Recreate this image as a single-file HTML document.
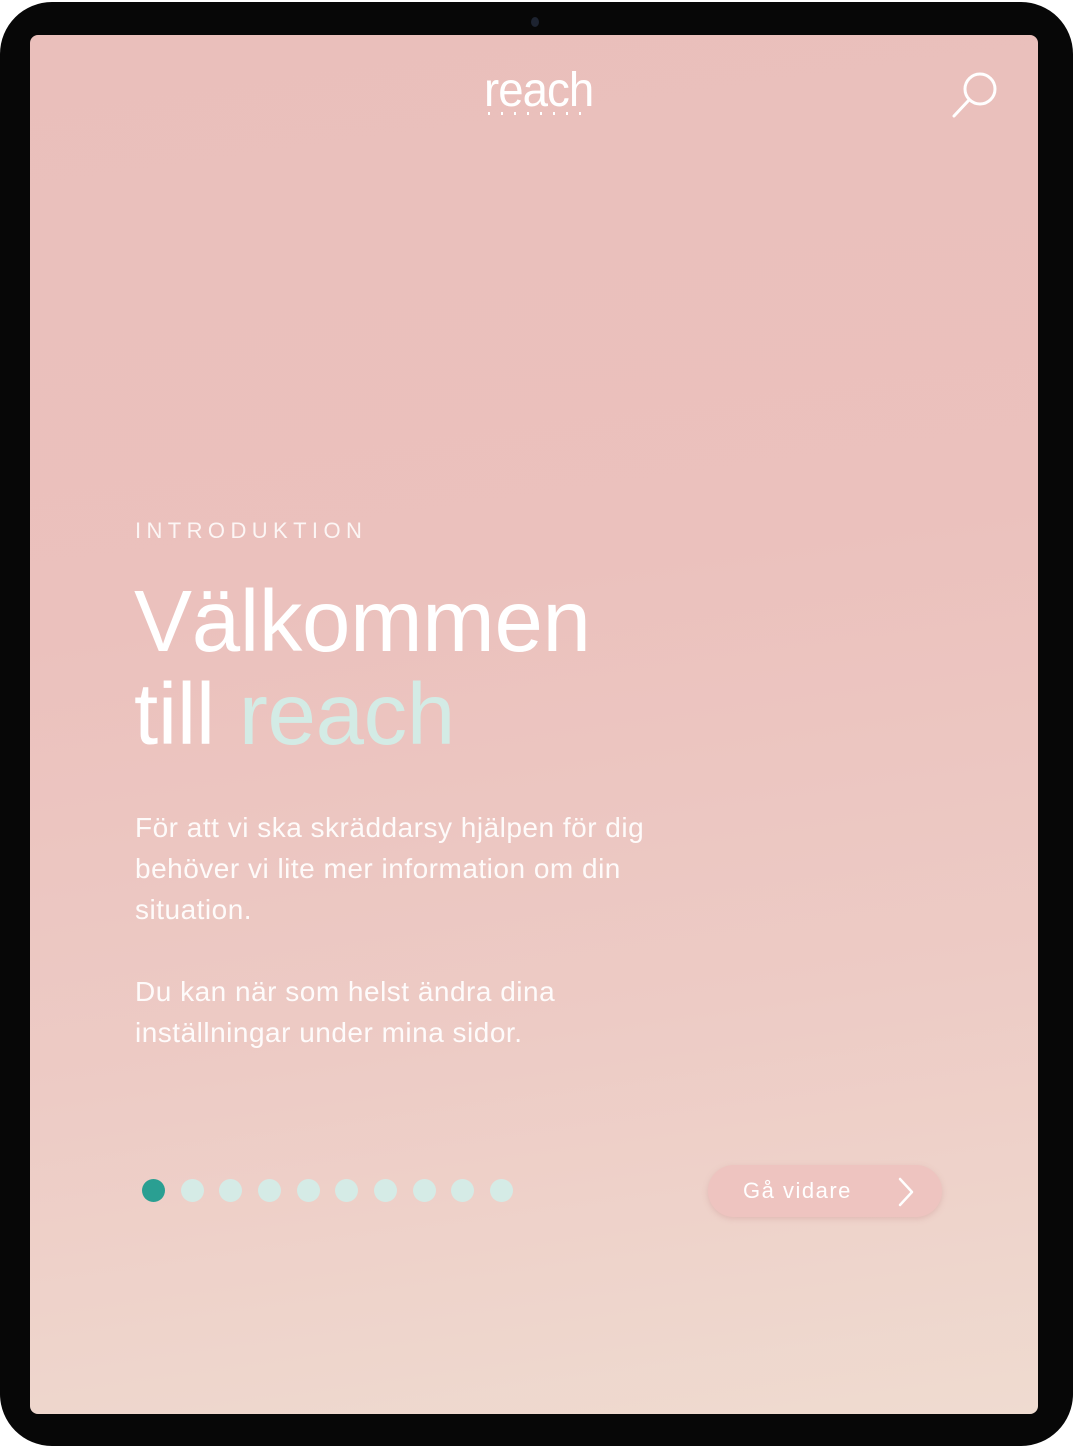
<!DOCTYPE html>
<html><head><meta charset="utf-8"><style>
html,body{margin:0;padding:0;background:#fff;width:1077px;height:1448px;overflow:hidden;font-family:"Liberation Sans",sans-serif}
.dev{position:absolute;left:0;top:2px;width:1073px;height:1444px;background:#070707;border-radius:52px}
.cam{position:absolute;left:531px;top:15px;width:8px;height:10px;border-radius:50%;background:#1d2330}
.scr{position:absolute;left:30px;top:35px;width:1008px;height:1379px;border-radius:8px;overflow:hidden;
background:linear-gradient(172deg,#eabfbb 0%,#ebc1bd 40%,#edcbc5 70%,#efdbd0 100%)}
.t{position:absolute;color:#fff;white-space:nowrap}
.logo{left:454px;top:28px;font-size:48px;font-family:"Liberation Sans Narrow","Liberation Sans",sans-serif;letter-spacing:-1px;transform:scaleX(.95);transform-origin:left}
.ldots{position:absolute;left:458px;top:77px;width:104px;height:3px;background:repeating-linear-gradient(90deg,#fff 0 2px,transparent 2px 13px)}
.intro{left:105px;top:483px;font-size:22px;letter-spacing:5.4px;color:rgba(255,255,255,.85)}
.h{left:104px;top:540px;font-size:87px;line-height:93px;letter-spacing:-.3px}
.p{left:105px;top:772px;font-size:28px;line-height:41px;letter-spacing:0.5px;color:rgba(255,255,255,.92)}
.dot{position:absolute;top:1144px;width:23px;height:23px;border-radius:50%;background:#d5ebe6}
.btn{position:absolute;left:678px;top:1130px;width:234px;height:52px;border-radius:26px;background:#eec4c0;box-shadow:0 2px 6px rgba(200,140,140,.35)}
</style></head><body>
<div class="dev"><div class="cam"></div></div>
<div class="scr">
<div class="t logo">reach</div><div class="ldots"></div>
<svg style="position:absolute;left:920px;top:33px" width="52" height="52" viewBox="0 0 52 52"><circle cx="30" cy="21" r="15" fill="none" stroke="#fff" stroke-width="3"/><line x1="19" y1="32" x2="4" y2="48" stroke="#fff" stroke-width="3" stroke-linecap="round"/></svg>
<div class="t intro">INTRODUKTION</div>
<div class="t h">Välkommen<br>till <span style="color:#d3ebe5">reach</span></div>
<div class="t p">För att vi ska skräddarsy hjälpen för dig<br>behöver vi lite mer information om din<br>situation.<br><br>Du kan när som helst ändra dina<br>inställningar under mina sidor.</div>
<div class="dot" style="left:112px;background:#2a9f92"></div>
<div class="dot" style="left:151px"></div><div class="dot" style="left:189px"></div><div class="dot" style="left:228px"></div><div class="dot" style="left:267px"></div><div class="dot" style="left:305px"></div><div class="dot" style="left:344px"></div><div class="dot" style="left:383px"></div><div class="dot" style="left:421px"></div><div class="dot" style="left:460px"></div>
<div class="btn"><div class="t" style="left:35px;top:13px;font-size:22px;letter-spacing:1.5px">Gå vidare</div>
<svg style="position:absolute;left:188px;top:12px" width="20" height="30" viewBox="0 0 20 30"><path d="M4 2 L16 15 L4 28" fill="none" stroke="#fff" stroke-width="2.5" stroke-linecap="round" stroke-linejoin="round"/></svg></div>
</div>
</body></html>
